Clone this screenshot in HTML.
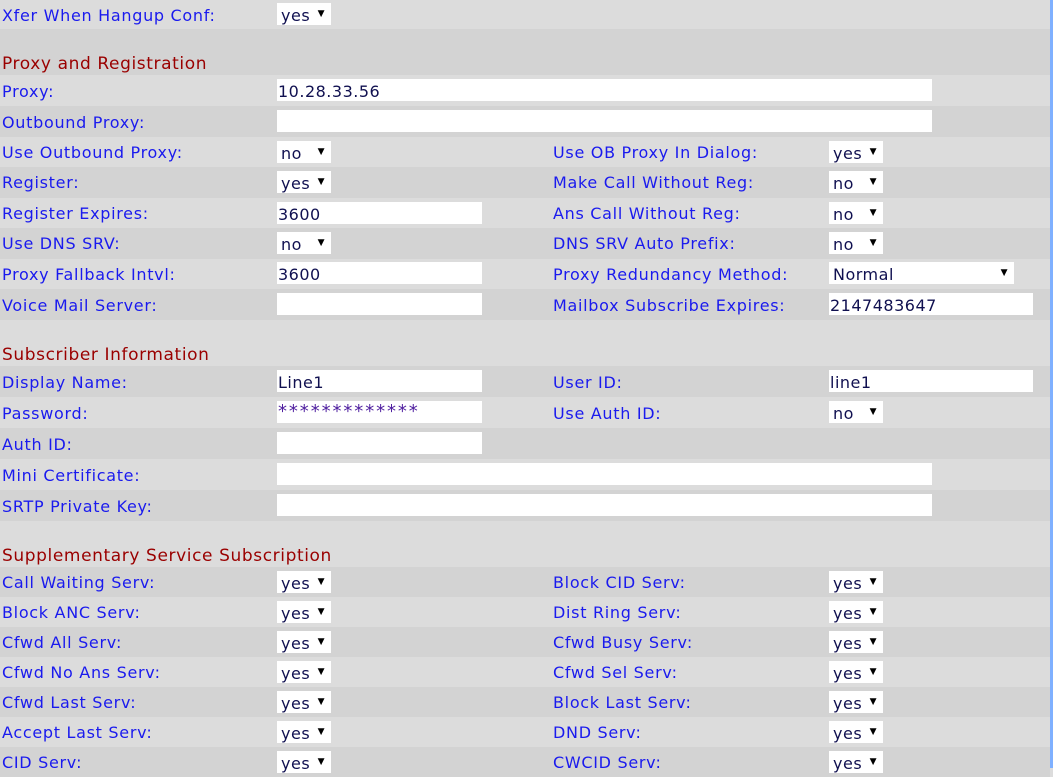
<!DOCTYPE html>
<html><head><meta charset="utf-8"><style>
body{margin:0;width:1053px;height:768px;overflow:hidden;background:#dcdcdc;font-family:"DejaVu Sans",Verdana,sans-serif;font-size:16px;letter-spacing:0.7px;position:relative}
.wrap{position:absolute;left:0;top:0;width:1050px}
.edge{position:absolute;left:1050px;top:0;width:3px;height:768px;background:#7fb0ff}
.r{position:relative;width:1050px}
.L{background:#dcdcdc}.D{background:#d3d3d3}
.lb{position:absolute;color:#1a1aee;white-space:nowrap;margin-top:1px}
.h{position:absolute;left:2px;bottom:1px;color:#9a0000;font-size:17px;letter-spacing:0.6px}
.c{position:absolute;background:#fff;height:22px;color:#101050;line-height:25px;box-sizing:border-box;padding-left:1px;white-space:nowrap;letter-spacing:0.5px}
.s{width:54px;padding-left:4px}
.s:after{content:"▼";position:absolute;right:6px;top:-1px;font-size:9px;color:#000}
.pw{font-size:18px;letter-spacing:1.9px;color:#5020a0;line-height:22px}
</style></head><body>
<div class="wrap">
<div class="r L" style="height:29px"><span class="lb" style="left:2px;top:5px">Xfer When Hangup Conf:</span><span class="c s" style="left:277px;top:3px">yes</span></div>
<div class="r D" style="height:46px"><span class="h">Proxy and Registration</span></div>
<div class="r L" style="height:31px"><span class="lb" style="left:2px;top:6px">Proxy:</span><span class="c" style="left:277px;top:4px;width:655px">10.28.33.56</span></div>
<div class="r D" style="height:31px"><span class="lb" style="left:2px;top:6px">Outbound Proxy:</span><span class="c" style="left:277px;top:4px;width:655px"></span></div>
<div class="r L" style="height:30px"><span class="lb" style="left:2px;top:5px">Use Outbound Proxy:</span><span class="c s" style="left:277px;top:4px">no</span><span class="lb" style="left:553px;top:5px">Use OB Proxy In Dialog:</span><span class="c s" style="left:829px;top:4px">yes</span></div>
<div class="r D" style="height:31px"><span class="lb" style="left:2px;top:5px">Register:</span><span class="c s" style="left:277px;top:4px">yes</span><span class="lb" style="left:553px;top:5px">Make Call Without Reg:</span><span class="c s" style="left:829px;top:4px">no</span></div>
<div class="r L" style="height:30px"><span class="lb" style="left:2px;top:5px">Register Expires:</span><span class="c" style="left:277px;top:4px;width:205px">3600</span><span class="lb" style="left:553px;top:5px">Ans Call Without Reg:</span><span class="c s" style="left:829px;top:4px">no</span></div>
<div class="r D" style="height:31px"><span class="lb" style="left:2px;top:5px">Use DNS SRV:</span><span class="c s" style="left:277px;top:4px">no</span><span class="lb" style="left:553px;top:5px">DNS SRV Auto Prefix:</span><span class="c s" style="left:829px;top:4px">no</span></div>
<div class="r L" style="height:30px"><span class="lb" style="left:2px;top:5px">Proxy Fallback Intvl:</span><span class="c" style="left:277px;top:3px;width:205px">3600</span><span class="lb" style="left:553px;top:5px">Proxy Redundancy Method:</span><span class="c s" style="left:829px;top:3px;width:185px">Normal</span></div>
<div class="r D" style="height:31px"><span class="lb" style="left:2px;top:6px">Voice Mail Server:</span><span class="c" style="left:277px;top:4px;width:205px"></span><span class="lb" style="left:553px;top:6px">Mailbox Subscribe Expires:</span><span class="c" style="left:829px;top:4px;width:204px">2147483647</span></div>
<div class="r L" style="height:46px"><span class="h">Subscriber Information</span></div>
<div class="r D" style="height:31px"><span class="lb" style="left:2px;top:6px">Display Name:</span><span class="c" style="left:277px;top:4px;width:205px">Line1</span><span class="lb" style="left:553px;top:6px">User ID:</span><span class="c" style="left:829px;top:4px;width:204px">line1</span></div>
<div class="r L" style="height:31px"><span class="lb" style="left:2px;top:6px">Password:</span><span class="c pw" style="left:277px;top:4px;width:205px">*************</span><span class="lb" style="left:553px;top:6px">Use Auth ID:</span><span class="c s" style="left:829px;top:4px">no</span></div>
<div class="r D" style="height:31px"><span class="lb" style="left:2px;top:6px">Auth ID:</span><span class="c" style="left:277px;top:4px;width:205px"></span></div>
<div class="r L" style="height:31px"><span class="lb" style="left:2px;top:6px">Mini Certificate:</span><span class="c" style="left:277px;top:4px;width:655px"></span></div>
<div class="r D" style="height:31px"><span class="lb" style="left:2px;top:6px">SRTP Private Key:</span><span class="c" style="left:277px;top:4px;width:655px"></span></div>
<div class="r L" style="height:46px"><span class="h">Supplementary Service Subscription</span></div>
<div class="r D" style="height:30px"><span class="lb" style="left:2px;top:5px">Call Waiting Serv:</span><span class="c s" style="left:277px;top:4px">yes</span><span class="lb" style="left:553px;top:5px">Block CID Serv:</span><span class="c s" style="left:829px;top:4px">yes</span></div>
<div class="r L" style="height:30px"><span class="lb" style="left:2px;top:5px">Block ANC Serv:</span><span class="c s" style="left:277px;top:4px">yes</span><span class="lb" style="left:553px;top:5px">Dist Ring Serv:</span><span class="c s" style="left:829px;top:4px">yes</span></div>
<div class="r D" style="height:30px"><span class="lb" style="left:2px;top:5px">Cfwd All Serv:</span><span class="c s" style="left:277px;top:4px">yes</span><span class="lb" style="left:553px;top:5px">Cfwd Busy Serv:</span><span class="c s" style="left:829px;top:4px">yes</span></div>
<div class="r L" style="height:30px"><span class="lb" style="left:2px;top:5px">Cfwd No Ans Serv:</span><span class="c s" style="left:277px;top:4px">yes</span><span class="lb" style="left:553px;top:5px">Cfwd Sel Serv:</span><span class="c s" style="left:829px;top:4px">yes</span></div>
<div class="r D" style="height:30px"><span class="lb" style="left:2px;top:5px">Cfwd Last Serv:</span><span class="c s" style="left:277px;top:4px">yes</span><span class="lb" style="left:553px;top:5px">Block Last Serv:</span><span class="c s" style="left:829px;top:4px">yes</span></div>
<div class="r L" style="height:30px"><span class="lb" style="left:2px;top:5px">Accept Last Serv:</span><span class="c s" style="left:277px;top:4px">yes</span><span class="lb" style="left:553px;top:5px">DND Serv:</span><span class="c s" style="left:829px;top:4px">yes</span></div>
<div class="r D" style="height:30px"><span class="lb" style="left:2px;top:5px">CID Serv:</span><span class="c s" style="left:277px;top:4px">yes</span><span class="lb" style="left:553px;top:5px">CWCID Serv:</span><span class="c s" style="left:829px;top:4px">yes</span></div>
</div>
<div class="edge"></div>
</body></html>
